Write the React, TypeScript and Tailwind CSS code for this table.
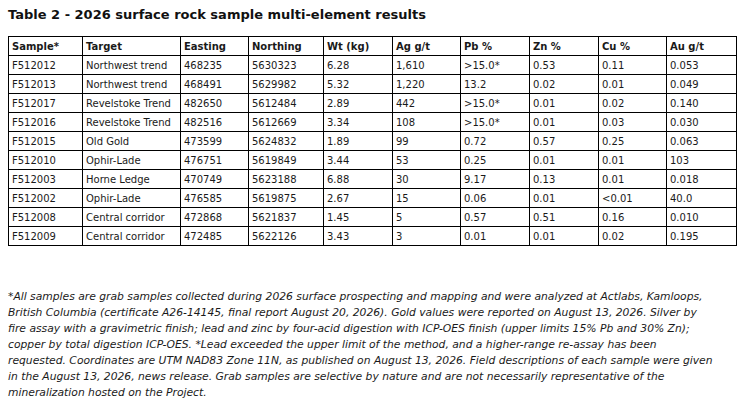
import React from "react";

const headers = ["Sample*", "Target", "Easting", "Northing", "Wt (kg)", "Ag g/t", "Pb %", "Zn %", "Cu %", "Au g/t"];
const widths = [74, 98, 68, 75, 69, 68, 69, 69, 68, 70];
const rows = [
  ["F512012", "Northwest trend", "468235", "5630323", "6.28", "1,610", ">15.0*", "0.53", "0.11", "0.053"],
  ["F512013", "Northwest trend", "468491", "5629982", "5.32", "1,220", "13.2", "0.02", "0.01", "0.049"],
  ["F512017", "Revelstoke Trend", "482650", "5612484", "2.89", "442", ">15.0*", "0.01", "0.02", "0.140"],
  ["F512016", "Revelstoke Trend", "482516", "5612669", "3.34", "108", ">15.0*", "0.01", "0.03", "0.030"],
  ["F512015", "Old Gold", "473599", "5624832", "1.89", "99", "0.72", "0.57", "0.25", "0.063"],
  ["F512010", "Ophir-Lade", "476751", "5619849", "3.44", "53", "0.25", "0.01", "0.01", "103"],
  ["F512003", "Horne Ledge", "470749", "5623188", "6.88", "30", "9.17", "0.13", "0.01", "0.018"],
  ["F512002", "Ophir-Lade", "476585", "5619875", "2.67", "15", "0.06", "0.01", "<0.01", "40.0"],
  ["F512008", "Central corridor", "472868", "5621837", "1.45", "5", "0.57", "0.51", "0.16", "0.010"],
  ["F512009", "Central corridor", "472485", "5622126", "3.43", "3", "0.01", "0.01", "0.02", "0.195"],
];

export default function App() {
  return (
    <div className="w-[748px] h-[413px] bg-white text-[#1a1a1a] overflow-hidden" style={{ fontFamily: '"DejaVu Sans", Verdana, sans-serif' }}>
      <div className="pt-[5px] pl-[8px] text-[13px] font-bold leading-[20px] text-[#111]">
        Table 2 - 2026 surface rock sample multi-element results
      </div>
      <table className="ml-[8px] mt-[11px] border-collapse table-fixed w-[728px] text-[10px]">
        <colgroup>
          {widths.map((w, i) => (
            <col key={i} style={{ width: w }} />
          ))}
        </colgroup>
        <thead>
          <tr className="h-[19px]">
            {headers.map((h) => (
              <th key={h} className="border border-black text-left font-bold px-[3px] py-0 whitespace-nowrap">
                {h}
              </th>
            ))}
          </tr>
        </thead>
        <tbody>
          {rows.map((r) => (
            <tr key={r[0]} className="h-[19px]">
              {r.map((c, i) => (
                <td key={i} className="border border-black px-[3px] py-0 whitespace-nowrap">
                  {c}
                </td>
              ))}
            </tr>
          ))}
        </tbody>
      </table>
      <p className="mt-[43px] pl-[8px] text-[10.75px] italic leading-[16px] text-[#1a1a1a] whitespace-nowrap">
        *All samples are grab samples collected during 2026 surface prospecting and mapping and were analyzed at Actlabs, Kamloops,
        <br />
        British Columbia (certificate A26-14145, final report August 20, 2026). Gold values were reported on August 13, 2026. Silver by
        <br />
        fire assay with a gravimetric finish; lead and zinc by four-acid digestion with ICP-OES finish (upper limits 15% Pb and 30% Zn);
        <br />
        copper by total digestion ICP-OES. *Lead exceeded the upper limit of the method, and a higher-range re-assay has been
        <br />
        requested. Coordinates are UTM NAD83 Zone 11N, as published on August 13, 2026. Field descriptions of each sample were given
        <br />
        in the August 13, 2026, news release. Grab samples are selective by nature and are not necessarily representative of the
        <br />
        mineralization hosted on the Project.
      </p>
    </div>
  );
}
